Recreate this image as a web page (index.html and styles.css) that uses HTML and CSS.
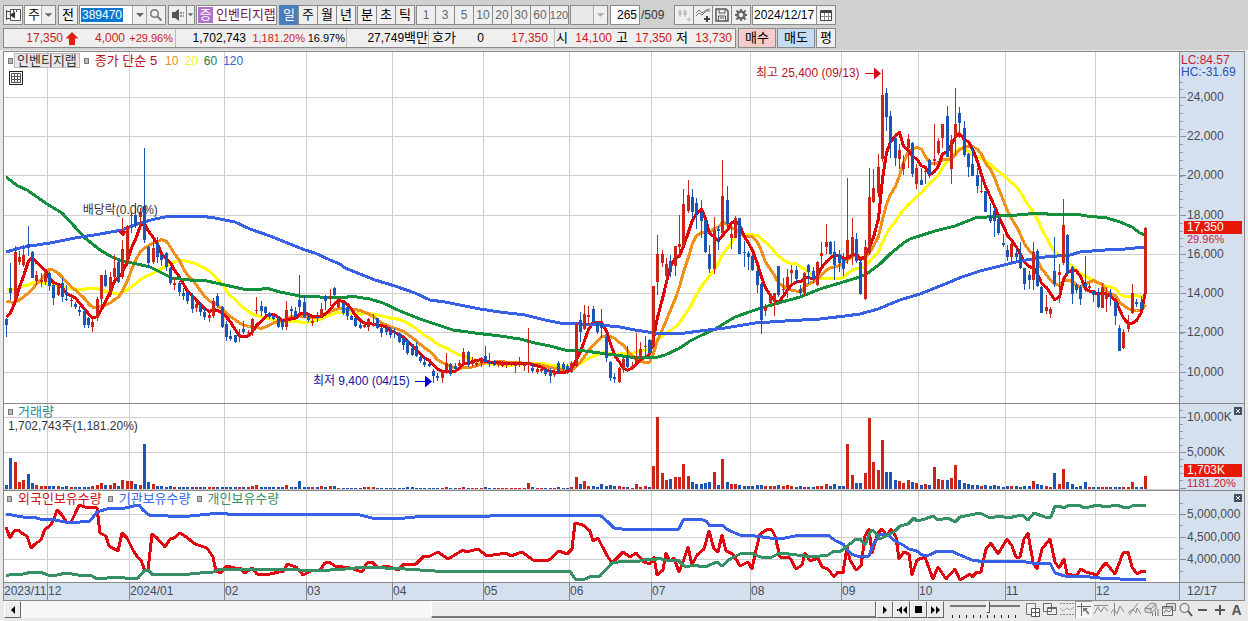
FILE: index.html
```html
<!DOCTYPE html>
<html lang="ko">
<head>
<meta charset="utf-8">
<title>인벤티지랩 일봉 차트</title>
<link rel="stylesheet" href="styles.css">
</head>
<body>
<header class="toolbar">
  <div class="row">
    <button class="btn" aria-label="패널 열기"><svg width="15" height="14" viewBox="0 0 15 14"><path d="M4.500 1.500h10v11h-10zM7.500 2v2M10.500 2v2" fill="#fff" stroke="#555"/><path d="M.5 2v10M1 3.500h3M1 10.500h3" stroke="#444"/><path d="M9 3.500v7L3.500 7z" fill="#333"/></svg></button>
    <span class="combo combo-kind gap"><select aria-label="종류"><option>주</option></select><svg class="drop" width="14" height="18" viewBox="0 0 14 18"><path d="M3 7h8l-4 4z" fill="#666"/></svg></span>
    <button class="btn gap">전</button>
    <span class="codebox gap"><input class="code" value="389470" aria-label="종목코드"><button class="flat arrow" aria-label="종목 목록"><svg width="12" height="18" viewBox="0 0 12 18"><path d="M2 7h8l-4 4z" fill="#666"/></svg></button><button class="flat find" aria-label="종목 검색"><svg width="14" height="14" viewBox="0 0 14 14"><circle cx="5.500" cy="5.500" r="3.800" fill="none" stroke="#777" stroke-width="1.500"/><path d="M8.500 8.500l4 4" stroke="#777" stroke-width="2"/></svg></button></span>
    <button class="btn sound gap" aria-label="소리"><svg width="14" height="14" viewBox="0 0 14 14"><path d="M1 4h3l4-3v12l-4-3H1z" fill="#555"/><path d="M9 5h2M9 8h2M12 5h1M12 8h1" stroke="#777" stroke-width="1.500"/></svg></button>
    <button class="btn slim" aria-label="소리 설정"><svg width="7" height="6" viewBox="0 0 8 6"><path d="M1 1h6l-3 3.500z" fill="#666"/></svg></button>
    <span class="stock gap"><b>증</b><span>인벤티지랩</span></span>
    <button class="btn on gap">일</button><button class="btn">주</button><button class="btn">월</button><button class="btn">년</button>
    <button class="btn gap">분</button><button class="btn">초</button><button class="btn">틱</button>
    <button class="btn num gap">1</button><button class="btn num">3</button><button class="btn num">5</button><button class="btn num">10</button><button class="btn num">20</button><button class="btn num">30</button><button class="btn num">60</button><button class="btn num wide">120</button>
    <span class="combo combo-min gap"><select aria-label="분 단위" disabled><option></option></select><svg class="drop" width="14" height="18" viewBox="0 0 14 18"><path d="M3 7h8l-4 4z" fill="#aaa"/></svg></span>
    <label class="bars gap"><input value="265" aria-label="봉 개수"><span>/509</span></label>
    <button class="btn" aria-label="봉 추가"><svg width="15" height="15" viewBox="0 0 15 15"><path d="M3 1v8M8 1v8M12 9v5M9.500 11.500h5" stroke="#bbb"/><path d="M1.500 3h3v4h-3zM6.500 3h3v4h-3z" fill="#bbb"/></svg></button>
    <button class="btn" aria-label="지표 추가"><svg width="15" height="15" viewBox="0 0 15 15"><path d="M0 5l3-3 3 3 4-3 4-1M0 8l3-3 3 2 4-4 4 0" fill="none" stroke="#777"/><path d="M11 8v6M8 11h6" stroke="#444" stroke-width="2"/></svg></button>
    <button class="btn" aria-label="저장"><svg width="14" height="14" viewBox="0 0 14 14"><path d="M1 1h10l2 2v10H1z" fill="#eee" stroke="#555" stroke-width="1.500"/><path d="M4 1v4h6V1M3.500 13V8h7v5M5 10h4" fill="none" stroke="#555"/></svg></button>
    <button class="btn" aria-label="설정"><svg width="14" height="14" viewBox="0 0 14 14"><circle cx="7" cy="7" r="3.400" fill="none" stroke="#666" stroke-width="2.400"/><path d="M7 1v2M7 11v2M1 7h2M11 7h2M2.500 2.500l2 2M9.500 9.500l2 2M11.500 2.500l-2 2M4.500 9.500l-2 2" stroke="#666" stroke-width="2"/></svg></button>
    <input class="date gap" value="2024/12/17" aria-label="기준일"><button class="btn" aria-label="달력"><svg width="12" height="11" viewBox="0 0 12 11"><path d="M.5.5h11v10H.5z" fill="#fff" stroke="#444"/><path d="M0 2h12" stroke="#444" stroke-width="2"/><path d="M1 6.500h10M4.500 3v7M8.500 3v7" stroke="#888"/></svg></button>
  </div>
  <div class="row">
    <div class="quote">
      <div class="cell c1"><span class="v w59 up">17,350</span><svg width="14" height="13" viewBox="0 0 14 13"><path d="M7 0l6.500 6.500H10V13H4V6.500H.5z" fill="#e02010"/></svg><span class="v w46 up">4,000</span><span class="v rate w48 up">+29.96%</span></div>
      <div class="cell c2"><span class="v w70">1,702,743</span><span class="v rate w59 up">1,181.20%</span><span class="v rate w40">16.97%</span></div>
      <div class="cell c3"><span class="v">27,749<i>백만</i></span></div>
      <div class="cell c4"><span class="k">호가</span><span class="v w28">0</span><span class="v w64 up">17,350</span></div>
      <div class="cell c5"><span class="k">시</span><span class="v w40 up">14,100</span><span class="k">고</span><span class="v w40 up">17,350</span><span class="k">저</span><span class="v w40 up">13,730</span></div>
    </div>
    <button class="btn buy gap">매수</button><button class="btn sell gap">매도</button><button class="btn avg gap">평</button>
  </div>
</header>

<main class="chart">
  <section class="panel price">
    <div class="plot">
      <svg id="price" viewBox="4 52 1175 351" preserveAspectRatio="none"></svg>
      <div class="legend"><i class="dot"></i><span class="tag">인벤티지랩</span><i class="dot"></i><span class="ma5">종가 단순 5</span><span class="ma10">10</span><span class="ma20">20</span><span class="ma60">60</span><span class="ma120">120</span></div>
      <button class="gridbtn" aria-label="표 보기"><svg width="10" height="10" viewBox="0 0 10 10"><path d="M.5.5h9v9h-9zM.5 3.500h9M.5 6.500h9M3.500.5v9M6.500.5v9" fill="none" stroke="#555"/></svg></button>
      <span class="note high">최고 25,400 (09/13)<svg width="16" height="12" viewBox="0 0 16 12"><path d="M0 6.500h10" stroke="#e00010"/><path d="M9 .5v12l7-6z" fill="#e00010"/></svg></span>
      <span class="note low">최저 9,400 (04/15)<svg width="17" height="12" viewBox="0 0 17 12"><path d="M0 6.500h11" stroke="#0000e0"/><path d="M10 .5v12l7-6z" fill="#0000e0"/></svg></span>
      <span class="note exdiv">배당락(0.00%)</span>
    </div>
    <div class="axis"><svg id="price-ticks" viewBox="0 52 64 351" preserveAspectRatio="none"></svg><div id="price-labels"></div>
      <span class="lc">LC:84.57</span><span class="hc">HC:-31.69</span>
      <span class="mark mark-price">17,350</span><span class="pct pct-price">29.96%</span>
    </div>
  </section>
  <section class="panel volume">
    <div class="plot">
      <svg id="volume" viewBox="4 404 1175 86" preserveAspectRatio="none"></svg>
      <div class="legend"><i class="dot"></i><span class="vol">거래량</span></div>
      <span class="volnow">1,702,743주(1,181.20%)</span>
    </div>
    <div class="axis"><svg id="volume-ticks" viewBox="0 404 64 86" preserveAspectRatio="none"></svg><div id="volume-labels"></div>
      <span class="mark mark-vol">1,703K</span><span class="pct pct-vol">1181.20%</span>
      <button class="close" aria-label="거래량 닫기"><svg width="8" height="8" viewBox="0 0 8 8"><path d="M2 2l4 4M6 2l-4 4" stroke="#fff"/></svg></button>
    </div>
  </section>
  <section class="panel holders">
    <div class="plot">
      <svg id="holders" viewBox="4 491 1175 91" preserveAspectRatio="none"></svg>
      <div class="legend"><i class="dot"></i><span class="foreign">외국인보유수량</span><i class="dot"></i><span class="inst">기관보유수량</span><i class="dot"></i><span class="indiv">개인보유수량</span></div>
    </div>
    <div class="axis"><svg id="holders-ticks" viewBox="0 491 64 91" preserveAspectRatio="none"></svg><div id="holders-labels"></div>
      <button class="close" aria-label="보유수량 닫기"><svg width="8" height="8" viewBox="0 0 8 8"><path d="M2 2l4 4M6 2l-4 4" stroke="#fff"/></svg></button>
    </div>
  </section>
  <div class="dates">
    <div class="months"><span>2023/11</span><span>12</span><span>2024/01</span><span>02</span><span>03</span><span>04</span><span>05</span><span>06</span><span>07</span><span>08</span><span>09</span><span>10</span><span>11</span><span>12</span></div>
    <div class="today">12/17</div>
  </div>
</main>

<footer class="bottom">
  <button class="step" aria-label="이전"><svg width="6" height="8" viewBox="0 0 6 8"><path d="M5 0v8L1 4z"/></svg></button>
  <div class="track"><div class="thumb"></div></div>
  <button class="step" aria-label="다음"><svg width="6" height="8" viewBox="0 0 6 8"><path d="M1 0v8l4-4z"/></svg></button>
  <button class="step" aria-label="뒤로"><svg width="10" height="8" viewBox="0 0 10 8"><path d="M5 0v8L1 4zM10 0v8L6 4zM0 3h1v2H0z"/></svg></button>
  <button class="step" aria-label="정지"><svg width="7" height="7" viewBox="0 0 7 7"><path d="M0 0h7v7H0z"/></svg></button>
  <button class="step" aria-label="앞으로"><svg width="10" height="8" viewBox="0 0 10 8"><path d="M0 0v8l4-4zM5 0v8l4-4z"/></svg></button>
  <label class="zoom"><input type="range" min="0" max="100" value="54" aria-label="확대 비율"></label>
  <div class="tools">
    <button aria-label="창 추가"><svg viewBox="0 0 15 15"><path d="M1.500 1.500h9v11h-9z" fill="#eee" stroke="#777"/><path d="M6.500 6.500h8v8h-8z" fill="#fff" stroke="#555"/><path d="M10.500 7v7M7 10.500h7" stroke="#555"/></svg></button>
    <button aria-label="창 복사"><svg viewBox="0 0 15 15"><path d="M1.500 1.500h8v8h-8zM5.500 5.500h9v7h-9z" fill="#eee" stroke="#666"/><path d="M5.500 6.500h9" stroke="#666"/></svg></button>
    <button aria-label="비교"><svg viewBox="0 0 15 15"><path d="M1 1.500h14M1 12.500h14" stroke="#888" stroke-dasharray="2 1"/><path d="M1 6l3 3 4-3 3 2 4-3" fill="none" stroke="#aaa"/></svg></button>
    <button class="on" aria-label="십자선"><svg viewBox="0 0 15 15"><path d="M1 4.500h14M5.500 1v13" stroke="#666"/><path d="M7 6l5 0-1.500 1.500 3 4-1.500 1-3-4L7 10z" fill="#777"/></svg></button>
    <button aria-label="수평선"><svg viewBox="0 0 15 15"><path d="M1 3.500h14M1 12l4-7 3 5 3-5 4 4" fill="none" stroke="#888"/></svg></button>
    <button aria-label="수직선"><svg viewBox="0 0 15 15"><path d="M4.500 1v13M1 11l3-4 3 5 3-8 4 6" fill="none" stroke="#888"/></svg></button>
    <button aria-label="추세선"><svg viewBox="0 0 15 15"><path d="M2 13L11 1M1 11l5-4 3 4 1-5 4 6" fill="none" stroke="#888"/></svg></button>
    <button aria-label="지우개"><svg viewBox="0 0 15 15"><path d="M1 6l6-5 5 1-5 5zM1 6v4l6 1V7zM7 11l5-4V2" fill="#ddd" stroke="#888"/><path d="M8.500 14v-3M11.500 14V9M14 14V7" stroke="#777"/></svg></button>
    <button aria-label="화면 목록"><svg viewBox="0 0 15 15"><path d="M5.500 1.500h9v7h-9z" fill="#ddd" stroke="#777"/><path d="M1.500 4.500h10v9h-10z" fill="#eee" stroke="#666"/><path d="M3 11l2-3 3 2 3-3M1.500 6h10" fill="none" stroke="#666"/></svg></button>
    <button aria-label="돋보기"><svg viewBox="0 0 15 15"><circle cx="6.500" cy="6" r="4.500" fill="none" stroke="#555"/><path d="M10 9l4 5" stroke="#555" stroke-width="2"/></svg></button>
    <button aria-label="축소"><svg viewBox="0 0 15 15"><path d="M3 8h9" stroke="#555" stroke-width="2"/></svg></button>
    <button aria-label="확대"><svg viewBox="0 0 15 15"><path d="M3 8h10M8 3v10" stroke="#555" stroke-width="2"/></svg></button>
    <button class="auto" aria-label="자동">A</button>
  </div>
</footer>
<script src="chart.js"></script>
</body>
</html>
```
FILE: styles.css
```css
* { box-sizing: border-box; }
body {
  margin: 0;
  height: 100vh;
  min-height: 480px;
  display: flex;
  flex-direction: column;
  background: #e9e9e9;
  color: #000;
  font: 12px/14px "Liberation Sans", "Noto Sans CJK KR", sans-serif;
  white-space: nowrap;
}
button, input, select { font: inherit; color: inherit; margin: 0; padding: 0; border-radius: 0; }
svg { display: block; flex: none; }
i { font-style: normal; }

/* toolbar */
.toolbar {
  flex: none;
  display: flex;
  flex-direction: column;
  gap: 3px;
  padding: 5px 0 2px 3px;
  background: #d0d0d0;
  border-bottom: 1px solid #e9e9e9;
}
.row { display: flex; height: 20px; }
.btn {
  width: 20px;
  height: 20px;
  margin-right: -1px;
  display: flex;
  align-items: center;
  justify-content: center;
  flex: none;
  border: 1px solid #8a8a8a;
  background: #efefef;
  font-size: 13px;
}
.gap { margin-left: 2px; }
.btn.sound { width: 19px; }
.btn.slim { width: 9px; }
.btn.on { background: #4a7cc0; color: #fff; border-color: #4a7cc0; }
.btn.num { color: #666; font-size: 12px; }
.btn.wide { font-size: 11px; }
.combo { display: grid; flex: none; height: 20px; border: 1px solid #8a8a8a; background: #fff; }
.combo select { grid-area: 1 / 1; appearance: none; border: 0; background: none; padding-left: 3px; font-size: 13px; }
.combo .drop { grid-area: 1 / 1; justify-self: end; background: #efefef; border-left: 1px solid #aaa; pointer-events: none; }
.combo-kind { width: 32px; }
.combo-min { width: 38px; background: #e9e9e9; }
.codebox { display: flex; flex: none; width: 87px; height: 20px; border: 1px solid #8a8a8a; background: #fff; }
.code {
  flex: 1;
  min-width: 0;
  border: 0;
  padding-left: 2px;
  color: #fff;
  background: linear-gradient(#0a78d0, #0a78d0) 1px 2px / 42px 14px no-repeat #fff;
}
.flat { border: 0; border-left: 1px solid #aaa; background: #efefef; display: flex; align-items: center; justify-content: center; }
.arrow { width: 14px; }
.find { width: 19px; }
.stock { display: flex; flex: none; align-items: center; gap: 3px; width: 81px; height: 20px; padding-left: 1px; border: 1px solid #8a8a8a; background: #fff; font-size: 13px; color: #7a1048; }
.stock b { width: 15px; line-height: 16px; text-align: center; font-weight: 400; color: #fff; background: #b070c8; }
.bars { display: flex; align-items: center; width: 64px; }
.bars input { width: 30px; height: 20px; border: 1px solid #8a8a8a; padding-right: 2px; text-align: right; background: #fff; }
.bars span { padding-left: 1px; color: #333; }
.date { width: 65px; height: 20px; border: 1px solid #8a8a8a; padding-left: 1px; background: #fff; }
.date + .btn { margin-left: -1px; }

/* quote strip */
.quote { display: flex; width: 733px; height: 20px; flex: none; border: 1px solid #8a8a8a; background: #efefef; }
.cell { display: flex; align-items: center; flex: none; border-right: 1px solid #bbb; }
.cell:last-child { border-right: 0; }
.v { text-align: right; flex: none; }
.v i { font-size: 13px; }
.rate { font-size: 11px; }
.k { font-size: 13px; flex: none; }
.up { color: #c81e1e; }
.c1 { width: 172px; }
.c1 svg { margin-left: 2px; }
.c2 { width: 171px; }
.c3 { width: 82px; justify-content: flex-end; }
.c4 { width: 126px; padding-left: 3px; }
.c5 { flex: 1; justify-content: space-between; padding: 0 3px 0 1px; }
.w28 { width: 28px; }
.w40 { width: 40px; }
.w46 { width: 46px; }
.w48 { width: 48px; }
.w59 { width: 59px; }
.w64 { width: 64px; }
.w70 { width: 70px; }
.btn.buy { width: 38px; background: #f4cccc; }
.btn.sell { width: 38px; background: #c4dcf4; }

/* chart */
.chart {
  flex: 1;
  min-height: 0;
  display: flex;
  flex-direction: column;
  margin: 0 3px;
  border: 1px solid #888;
}
.panel { display: grid; grid-template-columns: minmax(0, 1fr) 65px; grid-template-rows: minmax(0, 1fr); min-height: 0; border-bottom: 1px solid #888; }
.price { flex: 351 1 0; }
.volume { flex: 86 1 0; }
.holders { flex: 91 1 0; }
.plot { position: relative; background: #fff; overflow: hidden; }
.plot > svg, .axis > svg { width: 100%; height: 100%; }
.axis { position: relative; background: #d5e0ee; border-left: 1px solid #888; color: #454b58; overflow: hidden; }
.tick { position: absolute; left: 7px; line-height: 11px; transform: translateY(-50%); }
.legend { position: absolute; left: 4px; top: 1px; display: flex; align-items: center; gap: 6px; font-size: 13px; line-height: 14px; }
.volume .legend { gap: 5px; }
.holders .legend { left: 3px; }
.dot { width: 5px; height: 6px; border: 1px solid #777; background: #bbb; }
.tag { height: 15px; line-height: 13px; margin: 0 -2px 0 -5px; padding: 0 2px; border: 1px solid #bbb; background: #e6e6e6; color: #333; }
.ma5 { color: #c00820; margin-right: 2px; }
.ma10, .ma20, .ma60, .ma120 { font-size: 12px; }
.ma10 { color: #e09020; }
.ma20 { color: #f4f420; }
.ma60 { color: #108038; }
.ma120 { color: #3860d0; }
.vol { color: #2a8488; }
.foreign { color: #c81018; }
.inst { color: #3868e8; }
.indiv { color: #38906a; }
.volnow { position: absolute; left: 4px; top: 15px; color: #333; }
.gridbtn { position: absolute; left: 5px; top: 19px; width: 14px; height: 14px; display: flex; align-items: center; justify-content: center; border: 1px solid #222; background: #fff; }
.note { position: absolute; display: flex; align-items: center; gap: 5px; }
.high { right: 25.4%; top: 4%; color: #b81028; }
.low { right: 63.6%; top: 91.700%; color: #1010a0; }
.exdiv { left: 6.7%; top: 43%; color: #333; }
.lc, .hc { position: absolute; left: 1px; line-height: 12px; }
.lc { top: 2px; color: #c81e2e; }
.hc { top: 14px; color: #2850b8; }
.mark { position: absolute; left: 4px; right: 2px; padding-left: 3px; height: 13px; line-height: 13px; background: #e81808; color: #fff; }
.pct { position: absolute; left: 7px; font-size: 11px; line-height: 11px; color: #c82040; }
.mark-price { top: 48.2%; }
.pct-price { top: 51.900%; }
.mark-vol { top: 70%; }
.pct-vol { top: 85.500%; }
.close { position: absolute; right: 2px; top: 3px; border: 0; background: #405060; }
.dates { flex: none; display: grid; grid-template-columns: minmax(0, 1fr) 65px; height: 17px; background: #d5e0ee; color: #454b58; line-height: 16px; }
.months { display: grid; grid-template-columns: 43fr 82fr 95fr 82fr 86fr 91fr 86fr 82fr 99fr 91fr 77fr 87fr 90fr 84fr; }
.months span { min-width: 0; border-left: 1px solid #888; }
.months span:first-child { border-left: 0; }
.today { border-left: 1px solid #888; padding-left: 7px; }

/* bottom bar */
.bottom { flex: none; display: flex; height: 20px; padding: 0 3px 3px 4px; }
.step { width: 17px; height: 17px; display: flex; align-items: center; justify-content: center; flex: none; background: #ededed; border: 1px solid #fff; border-right-color: #666; border-bottom-color: #666; }
.track { flex: 1; display: flex; justify-content: flex-end; background: #f7f7f7; }
.thumb { width: 52%; background: #ededed; border: 1px solid #fff; border-right-color: #666; border-bottom: 2px solid #777; }
.zoom { flex: none; width: 70px; margin: 0 4px 0 6px; background: repeating-linear-gradient(90deg, #222 0 1px, transparent 1px 7px) 2px 14px / 66px 3px no-repeat; }
.zoom input { display: block; width: 70px; height: 12px; appearance: none; background: linear-gradient(#777, #777) 0 4px / 100% 2px no-repeat; }
.zoom input::-webkit-slider-thumb { appearance: none; width: 4px; height: 12px; background: #eee; border: 1px solid #fff; border-right: 1px solid #555; border-bottom: 1px solid #555; }
.tools { display: flex; flex: none; }
.tools button { width: 17px; height: 17px; display: flex; align-items: center; justify-content: center; border: 0; background: none; }
.tools svg { width: 15px; height: 15px; }
.tools .on { background: #f6f6f6; box-shadow: inset 1px 1px #999; }
.tools .auto { font-size: 14px; font-weight: 700; color: #555; }
```
FILE: chart.js
```js
const RED = '#cc2418', BLUE = '#1c56b4';
const FIRST_X = 6.5, PITCH = 4.3144;
const barX = i => Math.floor(FIRST_X + PITCH * i);

// One candle per entry: direction, then high / body top / body bottom / low as chart heights
const candles = `b318,319,325,337 b263,288,293,300 r246,252,300,300 r251,257,262,265 r245,255,265,267 b226,244,247,256 b251,252,278,278 r271,275,281,285 r273,280,282,287 r270,273,282,285
b272,273,286,291 b281,285,298,305 r285,286,295,296 b278,283,297,302 b285,299,300,301 r296,300,301,307 b302,304,307,309 b306,310,312,316 b309,311,325,328 b317,318,325,328
r319,322,327,332 r297,299,318,321 r275,275,299,308 b270,275,286,287 r272,277,295,297 r255,268,277,279 b260,262,282,283 r240,249,277,279 r225,226,263,266 r212,215,216,233
b203,215,226,228 r208,212,217,228 b148,206,240,243 b246,247,263,268 r241,248,262,264 b237,243,257,263 b250,255,260,266 b252,253,267,271 b267,268,283,285 r278,283,285,290
b281,283,292,296 b288,293,296,300 b290,292,301,304 b293,296,309,313 r301,304,308,312 b303,304,312,316 b308,312,317,320 r310,315,318,322 r298,301,316,318 b293,296,306,308
b306,307,327,328 b321,324,337,341 b330,336,339,341 b335,335,342,343 r329,334,337,342 b321,329,332,334 r330,332,333,337 r318,319,331,336 r297,310,311,314 b301,306,311,316
b306,307,313,317 b312,313,317,319 b313,316,319,320 b316,318,327,328 b320,322,327,330 r301,310,327,330 b306,309,311,317 b307,311,317,320 b275,300,307,317 b295,302,317,318
b315,317,320,322 r318,321,323,326 b312,317,318,322 r303,309,317,318 b295,296,301,310 r289,296,299,306 b287,288,295,296 r298,302,307,308 b302,303,313,315 b305,307,316,320
b315,316,320,320 b317,318,326,327 b322,325,328,329 r322,325,327,328 r318,319,327,331 r314,323,325,327 b318,318,328,329 b327,328,333,337 b327,328,332,335 b327,330,335,338
b328,332,333,338 b332,333,342,343 b335,338,345,350 b339,340,353,355 b345,348,355,356 b342,346,356,357 b355,357,361,363 b358,362,365,367 b360,364,366,367 b369,371,376,383
b373,376,378,381 r370,372,378,383 r353,363,373,374 b363,364,373,376 b363,366,369,373 r360,363,366,368 r348,352,363,366 b351,352,362,367 r357,362,364,367 r359,363,365,367
r357,359,363,367 b346,356,362,363 b353,362,364,367 b360,363,365,366 r361,363,365,367 r361,363,366,367 r361,363,364,368 r362,363,365,366 r362,364,366,373 r357,362,364,367
r362,364,366,371 r328,363,365,373 b364,368,371,373 r366,369,372,374 r367,369,371,373 b368,369,374,376 b368,371,376,383 r370,372,375,377 b361,363,371,373 b362,364,369,372
b364,366,370,374 r361,363,372,373 r323,324,366,367 b312,320,332,342 r305,314,329,330 r306,315,317,325 b306,309,322,323 b322,322,332,334 b309,323,328,338 b335,337,358,362
b361,362,378,381 b373,377,379,383 r367,368,382,383 r357,359,370,373 b346,357,367,368 r362,366,369,370 r333,358,362,363 r342,349,356,358 r336,346,347,357 b339,340,353,355
r286,286,347,348 r235,254,282,295 r250,254,263,267 r258,264,276,283 b255,261,272,277 r246,246,266,276 r215,244,247,257 r189,204,247,247 r180,195,211,213 b189,197,212,218
b198,203,213,229 b200,212,221,238 b218,220,252,253 b245,254,269,273 r217,230,269,274 b226,229,231,250 r160,196,233,236 b186,200,224,227 r225,234,238,249 r216,218,238,238
b218,218,254,254 b241,252,253,267 b251,253,257,270 b255,256,270,271 b268,271,285,293 b282,284,320,334 r304,307,311,316 r293,296,303,304 r293,293,302,316 b266,266,295,297
r278,289,290,293 r269,277,287,298 r265,270,273,284 b266,270,279,283 b285,289,293,296 r272,273,293,296 b264,265,272,284 b267,271,279,283 r261,262,285,286 r242,253,256,265
r224,242,247,254 b241,242,254,255 b241,252,265,280 b250,254,263,272 b253,259,269,276 r178,240,257,264 r218,237,255,265 b233,239,261,263 b260,262,294,295 r240,247,299,300
r168,197,253,255 r169,188,202,203 r154,167,193,197 r69,95,159,162 b88,93,117,131 b111,116,142,158 b133,138,158,166 r144,150,159,169 r155,163,169,175 r134,139,148,168
b142,143,174,177 r164,168,184,189 b168,180,185,185 r169,171,172,184 b159,160,175,178 r124,159,161,165 r138,141,153,155 r124,124,138,148 b106,116,157,157 r135,140,169,184
r88,124,137,155 b107,113,123,138 b121,128,155,157 b153,154,167,177 b147,164,176,176 b168,175,186,193 r169,191,192,193 b191,191,212,212 b203,216,221,223 b208,211,221,237
b217,219,233,235 b234,243,245,247 b245,250,257,261 r239,244,257,263 b249,253,257,261 b242,254,268,269 b268,268,284,290 b271,275,280,289 r242,252,280,290 b249,251,286,287
b286,287,313,313 r295,307,311,314 r307,309,314,318 b237,271,284,287 r264,272,275,303 r199,225,263,265 b234,235,274,275 b266,267,294,304 b283,285,290,293 b285,287,299,305
b256,283,287,292 r283,286,288,290 b290,291,295,302 b288,293,307,308 r283,287,308,308 r287,295,299,312 b289,293,297,306 b300,302,316,325 b325,328,351,351 r329,332,348,349
r315,323,329,332 r284,293,313,314 b299,302,304,307 b296,302,309,310 r227,228,293,294`.split(/\s+/).map(t => {
  const [high, top, bottom, low] = t.slice(1).split(',').map(Number);
  return { up: t[0] === 'r', high, top, bottom, low };
});

// Volume bar heights; quiet days fall back to a thin bar
const volume = candles.map((_, i) => (i < 75 ? 2 : i > 205 ? 2 : 1));
const setVolume = (start, list) => list.forEach((v, k) => { volume[start + k] = v; });
setVolume(0, [4, 31, 27, 7, 9, 15, 6, 4, 3, 3, 3, 3, 3, 2, 3, 2, 2, 2, 2, 2, 3, 4, 6, 4, 4, 6, 3, 9, 8, 8, 5, 4, 45, 7, 5, 3, 3, 2, 3]);
setVolume(57, [3, 4]); setVolume(65, [4, 2, 2, 8]); setVolume(73, [3, 2, 3, 3]); setVolume(83, [2, 2, 2]);
setVolume(93, [2, 2]); setVolume(102, [2]); setVolume(106, [2]); setVolume(111, [2]); setVolume(121, [6, 2]); setVolume(128, [2]);
setVolume(131, [2, 12, 5, 8, 3, 3, 2, 5, 3, 4, 3, 3, 2, 2, 1, 5, 2, 3, 2, 23, 72, 16, 9, 10, 12, 12, 25, 13, 7, 5, 5, 6, 7, 17, 4, 30, 7, 5, 5, 4, 3, 3, 3, 4, 4, 3, 3, 3, 4, 3, 4, 3, 2, 3, 2, 2, 2, 3, 3, 5, 3, 5, 3, 3, 45, 14, 6, 6, 16, 71, 27, 19, 49, 17, 17, 9, 8, 6, 9, 7, 6, 4, 5, 4, 22, 10, 9, 9, 11, 24, 9, 6, 5, 4, 4, 3, 4, 3, 4, 3, 2, 3, 3, 3, 2, 3, 3, 8, 5, 4, 3, 2, 16, 5, 20, 7, 5, 2, 3, 7]);
setVolume(261, [7, 2, 2, 13]);

const ma60 = '6,177 10,180 18,186 27,190 37,197 47,204 62,213 75,227 85,238 100,250 112,257 122,261 137,264 150,267 160,272 172,278 190,280 207,281 225,285 243,289 258,290 266,288 280,292 300,296 320,297 345,298 350,296 370,299 383,303 400,311 420,319 435,324 453,330 475,333 500,336 520,339 535,343 550,346 565,350 585,351 600,353 615,355 630,357 655,358 665,355 680,348 690,341 700,336 715,329 735,317 755,310 775,304 800,297 820,289 840,283 860,277 868,273 880,264 890,254 905,242 910,239 935,231 955,226 975,218 1000,216 1017,215 1040,213 1055,215 1075,214 1087,216 1107,218 1120,222 1132,227 1140,233 1145,235';
const ma120 = '6,252 20,248 30,246 50,243 75,238 100,234 122,230 140,223 155,219 165,217 180,216 200,216 215,218 235,222 250,229 270,236 290,244 305,250 315,253 330,260 340,264 345,268 360,274 375,280 395,286 415,293 430,300 445,302 465,306 480,309 500,312 525,315 545,320 560,323 580,324 600,325 620,327 635,330 655,333 685,333 700,331 725,328 755,323 785,321 820,319 845,316 860,314 878,309 900,300 920,294 945,284 962,277 980,271 1000,266 1020,261 1045,257 1070,255 1080,252 1105,250 1125,249 1145,247';
const foreign = '6,527 10,538 14,531 18,530 23,534 27,536 31,548 35,544 41,540 45,529 50,526 54,519 57,510 62,515 67,523 71,522 75,514 79,505 85,507 97,508 100,533 106,536 109,546 118,551 122,533 127,538 133,550 138,558 141,560 145,571 148,570 152,534 157,538 165,547 170,539 174,538 180,533 185,536 195,544 207,548 213,557 216,571 220,573 227,566 235,568 240,568 245,573 252,568 257,574 270,574 284,571 287,564 296,567 303,575 311,571 320,570 325,563 329,562 335,566 350,568 362,572 367,563 372,562 378,568 387,566 398,570 404,564 416,564 424,556 430,556 438,552 448,559 463,550 466,552 478,549 487,556 506,553 511,556 522,552 533,560 549,560 559,551 567,554 572,549 575,523 583,525 590,531 593,541 598,538 602,546 608,557 612,563 623,552 630,557 636,553 644,562 650,564 654,557 657,575 663,570 666,553 670,561 674,558 679,572 683,562 688,547 692,565 697,555 704,549 709,531 714,549 718,552 722,535 726,551 733,554 740,566 748,562 752,569 756,550 760,534 768,529 772,530 775,536 780,557 790,558 796,569 802,565 805,553 810,561 818,558 822,567 828,569 834,577 838,572 843,573 847,547 850,560 856,570 861,566 865,536 869,529 872,553 878,533 882,529 887,536 891,529 896,537 899,559 904,552 909,554 912,575 917,560 925,557 933,579 938,567 946,579 955,569 960,580 970,574 972,577 977,572 981,572 986,549 991,543 998,554 1007,539 1012,546 1016,557 1020,557 1024,539 1028,533 1033,562 1037,569 1042,549 1050,539 1055,562 1059,568 1064,559 1067,574 1076,576 1081,569 1086,572 1097,575 1102,567 1106,563 1115,574 1123,553 1128,552 1132,567 1137,574 1142,571 1146,571';
const institution = '6,514 23,517 33,517 40,519 55,520 70,523 90,521 97,512 110,508 120,509 139,505 143,510 149,515 165,515 171,517 190,516 220,513 235,515 246,514 256,515 260,514 345,514 360,515 372,518 405,518 425,516 490,516 492,515 590,515 601,516 608,522 614,528 622,529 679,529 683,520 700,519 706,521 710,526 722,525 728,530 740,535 755,536 770,538 785,538 795,536 828,535 836,541 843,544 851,554 857,556 869,556 873,545 880,534 888,535 895,541 903,545 909,549 917,551 922,555 929,555 938,551 951,551 960,555 972,560 985,562 1020,561 1032,563 1050,563 1055,573 1065,576 1090,577 1100,578 1120,579 1146,579';
const individual = '6,576 12,574 23,574 32,572 40,572 48,575 57,575 66,573 78,575 92,576 97,579 118,577 125,578 138,578 144,571 148,570 153,575 165,574 180,575 200,573 213,572 220,569 285,569 315,571 345,569 365,567 405,569 435,571 500,571 570,571 575,579 585,579 592,576 600,576 612,563 618,562 640,561 646,559 655,560 658,558 665,560 678,560 684,566 688,567 692,565 705,567 717,562 722,566 730,559 740,554 752,553 758,556 764,558 772,557 780,553 797,555 812,557 828,555 834,551 841,551 850,544 856,539 860,539 865,545 870,532 873,530 880,539 888,535 895,531 900,526 908,524 914,518 917,521 925,519 933,516 938,520 948,518 955,522 960,517 975,514 980,513 990,518 1000,516 1008,518 1022,515 1028,520 1034,513 1045,517 1051,517 1055,506 1059,506 1064,508 1069,505 1078,505 1085,508 1098,505 1105,507 1117,505 1125,508 1130,507 1134,505 1146,505';

const rect = (x, y, w, h, fill) => `<rect x="${x}" y="${y}" width="${w}" height="${h}" fill="${fill}"/>`;
const line = (points, color) => `<polyline points="${points}" fill="none" stroke="${color}" stroke-width="3" stroke-linejoin="round"/>`;
const months = [47, 129, 224, 306, 392, 483, 569, 651, 750, 841, 918, 1005, 1095];

function grid(top, height, rows) {
  return months.map(x => rect(x, top, 1, height, '#cfcfcf')).join('') + rows.map(y => rect(4, y, 1173, 1, '#cfcfcf')).join('');
}

// Moving average of closes, led in by values from before the visible range
function average(n, lead) {
  const close = candles.map(c => (c.up ? c.top : c.bottom));
  return close.map((_, i) => {
    const y = i < n - 1 ? lead[i] : close.slice(i - n + 1, i + 1).reduce((a, b) => a + b) / n;
    return `${barX(i) + 0.5},${y.toFixed(1)}`;
  }).join(' ');
}

function draw(id, content) {
  document.getElementById(id).innerHTML = `<g shape-rendering="crispEdges">${content}</g>`;
}

function axis(id, top, height, majors, minors) {
  draw(`${id}-ticks`, majors.map(([y]) => rect(0, y, 6, 1, '#888')).join('') + minors.map(y => rect(0, Math.round(y), 3, 1, '#999')).join(''));
  document.getElementById(`${id}-labels`).innerHTML = majors.map(([y, text]) => text ? `<span class="tick" style="top:${((y - top) / height * 100).toFixed(2)}%">${text}</span>` : '').join('');
}
const steps = (from, to, by) => { const out = []; for (let y = from; y <= to; y += by) out.push(y); return out; };

const priceRows = [97, 136, 175, 215, 254, 293, 332, 372];
draw('price',
  grid(52, 351, priceRows) +
  line(average(20, [289, 289, 289, 287, 286, 285, 283, 282, 283, 283, 283, 285, 286, 287, 288, 288, 289, 289, 289]), '#ffff00') +
  line(average(10, [301, 302, 302, 300, 297, 293, 289, 284, 279]), '#f09018') +
  line(average(5, [317, 313, 301, 287]), '#e00008') +
  line(ma60, '#14903c') +
  line(ma120, '#3860e4') +
  candles.map((c, i) => {
    const color = c.up ? RED : BLUE, x = barX(i);
    return rect(x, c.high, 1, Math.max(1, c.low - c.high), color) + rect(x - 1, c.top, 3, Math.max(1, c.bottom - c.top), color);
  }).join('') +
  rect(122, 218, 1, 14, RED) + '<path d="M118 231h9l-4 6z" fill="#e00008"/>');
axis('price', 52, 351, priceRows.map((y, i) => [y, `${24 - i * 2},000`]), steps(81.5, 396, 7.85));

draw('volume',
  grid(404, 86, [417, 452]) + rect(4, 489, 1175, 1, '#cfcfcf') +
  candles.map((c, i) => rect(barX(i) - 1, 489 - volume[i], 3, volume[i], c.up ? RED : BLUE)).join(''));
axis('volume', 404, 86, [[417, '10,000K'], [452, '5,000K'], [488, '']], steps(410, 486, 7));

draw('holders',
  grid(491, 91, [514, 537, 559]) +
  line(foreign, '#e00810') + line(institution, '#3860e8') + line(individual, '#369066'));
axis('holders', 491, 91, [[514, '5,000,000'], [537, '4,500,000'], [559, '4,000,000']], [503, 525, 548, 571]);
```
